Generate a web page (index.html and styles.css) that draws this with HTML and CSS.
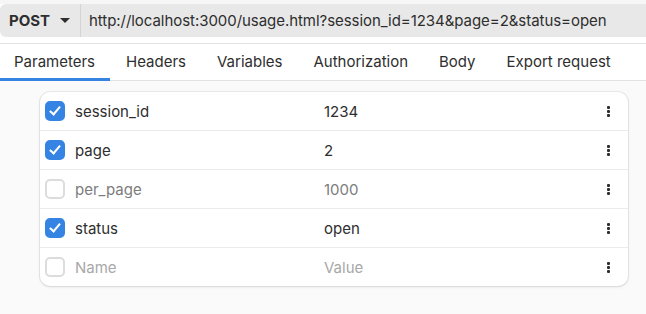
FILE: index.html
```html
<!DOCTYPE html>
<html lang="en">
<head>
    <meta charset="UTF-8">
    <title>Request</title>
    <link rel="stylesheet" href="styles.css">
</head>
<body>

    <div class="topbar">
        <div class="entry">
            <div class="method">POST <span class="arrow"></span></div>
            <div class="url">http://localhost:3000/usage.html?session_id=1234&amp;page=2&amp;status=open</div>
        </div>
    </div>

    <div class="tabs">
        <div class="tab active">Parameters</div>
        <div class="tab">Headers</div>
        <div class="tab">Variables</div>
        <div class="tab">Authorization</div>
        <div class="tab">Body</div>
        <div class="tab">Export request</div>
    </div>

    <div class="content">
        <div class="card">
            <div class="row">
                <span class="check on"></span>
                <span class="name">session_id</span>
                <span class="value">1234</span>
                <span class="menu"><i></i><i></i><i></i></span>
            </div>
            <div class="row">
                <span class="check on"></span>
                <span class="name">page</span>
                <span class="value">2</span>
                <span class="menu"><i></i><i></i><i></i></span>
            </div>
            <div class="row off">
                <span class="check"></span>
                <span class="name">per_page</span>
                <span class="value">1000</span>
                <span class="menu"><i></i><i></i><i></i></span>
            </div>
            <div class="row">
                <span class="check on"></span>
                <span class="name">status</span>
                <span class="value">open</span>
                <span class="menu"><i></i><i></i><i></i></span>
            </div>
            <div class="row empty">
                <span class="check"></span>
                <span class="name">Name</span>
                <span class="value">Value</span>
                <span class="menu"><i></i><i></i><i></i></span>
            </div>
        </div>
    </div>

</body>
</html>
```

FILE: styles.css
```css
body {
    font-family: Inter, "Noto Sans", sans-serif;
    font-size: 15px;
    color: #2e2e2e;
    margin: 0;
    padding: 0;
    background-color: #fafafa;
    width: 646px;
    height: 314px;
    overflow: hidden;
}
.topbar {
    background-color: #ffffff;
    padding: 4px 0 6px 0;
    box-shadow: inset 0 4px 0 #f6f6f6;
    border-bottom: 1px solid #e3e3e3;
}
.entry {
    display: flex;
    align-items: center;
    height: 33px;
    background-color: #e8e8e8;
    border-radius: 6px 0 0 6px;
    margin-right: -20px;
}
.method {
    display: flex;
    align-items: center;
    gap: 10px;
    font-weight: bold;
    padding: 0 0 0 9px;
    width: 71px;
    height: 100%;
    border-right: 1px solid #d4d4d4;
}
.arrow {
    width: 0;
    height: 0;
    border-left: 5px solid transparent;
    border-right: 5px solid transparent;
    border-top: 5px solid #2e2e2e;
}
.url {
    padding-left: 8px;
    white-space: nowrap;
    letter-spacing: -0.05px;
}
.tabs {
    display: flex;
    height: 36px;
    background-color: #ffffff;
    border-bottom: 1px solid #e3e3e3;
}
.tab {
    display: flex;
    align-items: center;
    padding: 0 15px 0 16px;
    border-bottom: 3px solid transparent;
    margin-bottom: -1px;
}
.tab:first-child {
    padding-left: 14px;
}
.tab.active {
    border-bottom-color: #3584e4;
}
.content {
    padding: 11px 18px 0 40px;
}
.card {
    background-color: #ffffff;
    border-radius: 10px;
    box-shadow: 0 0 0 1px rgba(0,0,0,0.06), 0 1px 3px rgba(0,0,0,0.1);
}
.row {
    display: flex;
    align-items: center;
    height: 38px;
    border-bottom: 1px solid #ebebeb;
}
.row:last-child {
    border-bottom: 0;
}
.check {
    width: 16px;
    height: 16px;
    margin: 0 10px 0 5px;
    border: 2px solid #dcdcdc;
    border-radius: 5px;
    position: relative;
}
.check.on {
    background-color: #3584e4;
    border-color: #3584e4;
}
.check.on::after {
    content: '';
    position: absolute;
    left: 5px;
    top: 1px;
    width: 4px;
    height: 9px;
    border-right: 2px solid white;
    border-bottom: 2px solid white;
    transform: rotate(40deg);
}
.name {
    width: 249px;
}
.value {
    flex: 1;
}
.off .name,
.off .value {
    color: #7c7c7c;
}
.empty .name,
.empty .value {
    color: #a8a8a8;
}
.menu {
    display: flex;
    flex-direction: column;
    gap: 1px;
    margin-right: 18px;
}
.menu i {
    width: 3px;
    height: 3px;
    background-color: #2e2e2e;
    border-radius: 1px;
}
```
